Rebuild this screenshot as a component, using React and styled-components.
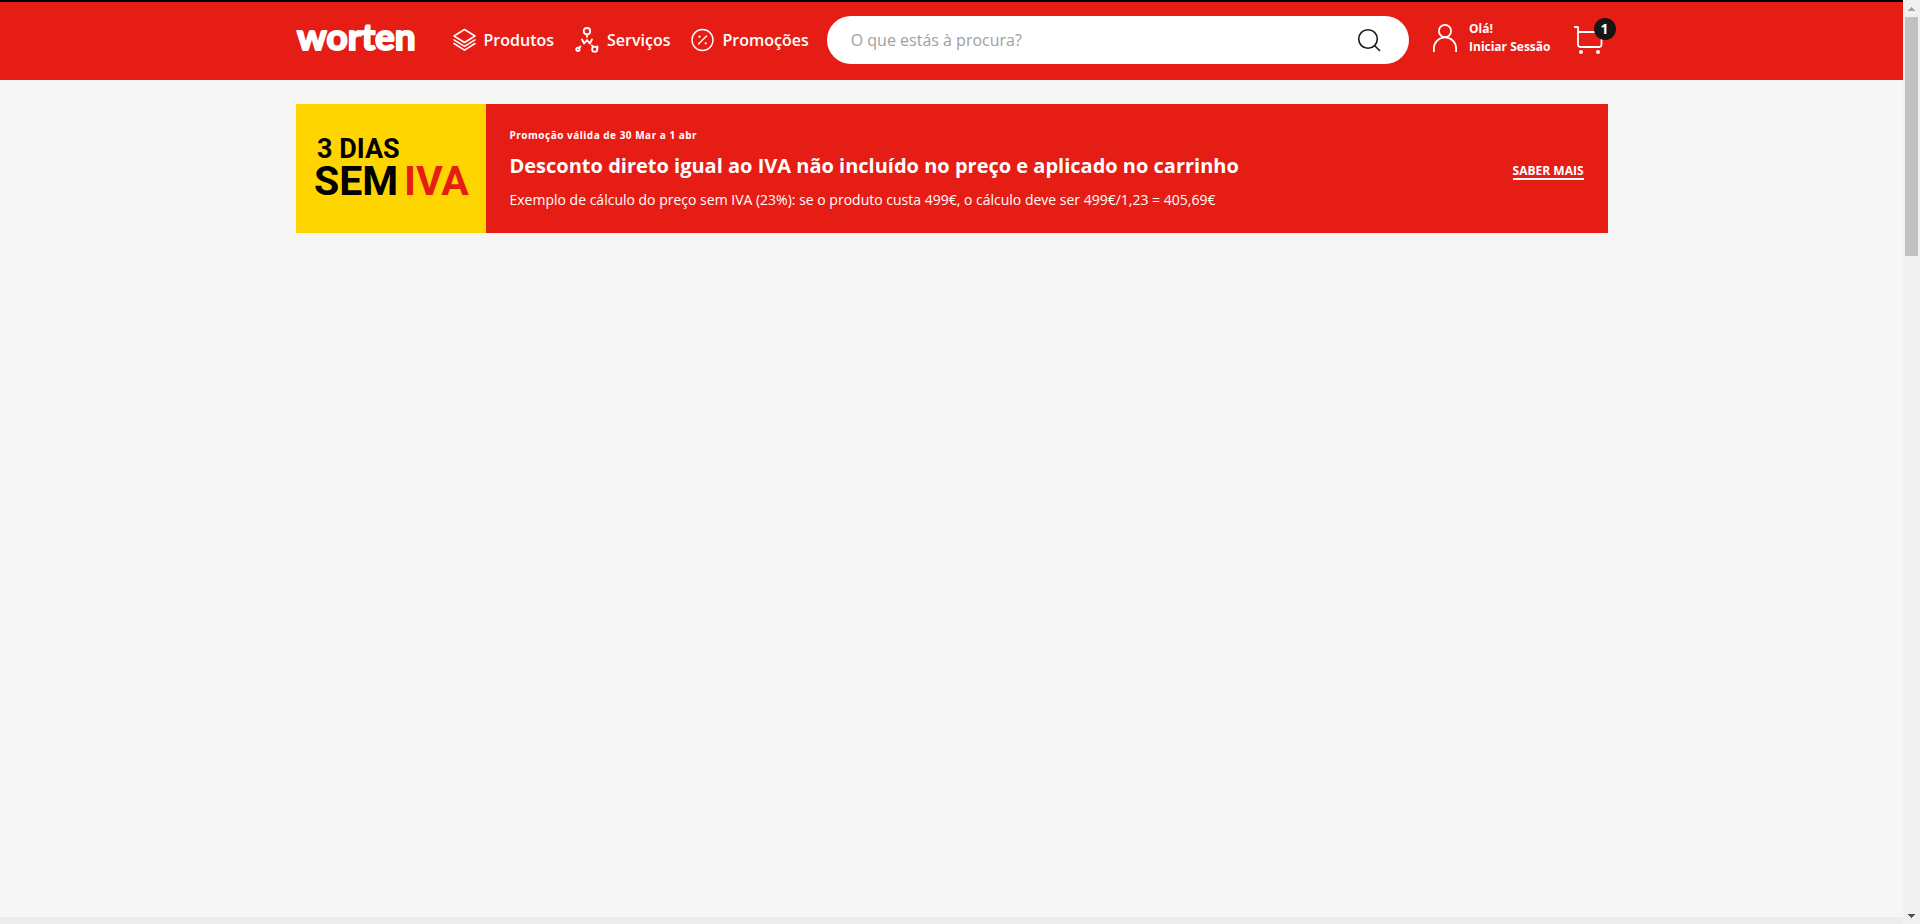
import React from "react";
import styled, { createGlobalStyle } from "styled-components";

const red = "#e61d15";

const GlobalStyle = createGlobalStyle`
  *, *::before, *::after { box-sizing: border-box; }
  body {
    margin: 0;
    background: #f6f6f6;
    color: #fff;
    font-family: "Open Sans", "Noto Sans", sans-serif;
    font-size: 16px;
  }
  a { color: inherit; text-decoration: none; }
  button { border: 0; padding: 0; background: none; color: inherit; font: inherit; cursor: pointer; }
  svg { display: block; flex: none; }
`;

const Screen = styled.div`
  display: grid;
  grid-template-columns: minmax(0, 1fr) 17px;
  min-height: 100vh;
`;

const Page = styled.div`
  display: flex;
  flex-direction: column;
`;

const Header = styled.header`
  background: ${red};
  border-top: 2px solid #000;
`;

const Container = styled.div`
  width: 100%;
  max-width: 1312px;
  margin: 0 auto;
`;

const HeaderRow = styled(Container)`
  display: flex;
  align-items: center;
  height: 78px;
  padding-bottom: 2px;
`;

const LogoLink = styled.a`
  margin-right: 37px;
`;

const Nav = styled.nav`
  display: flex;
  gap: 21px;
  margin-right: 18px;
`;

const NavLink = styled.a`
  display: flex;
  align-items: center;
  gap: 8px;
  font-weight: 600;
  line-height: 24px;
`;

const SearchForm = styled.form`
  display: flex;
  flex: 1;
  align-items: center;
  min-width: 0;
  height: 48px;
  padding: 0 28px 0 24px;
  border-radius: 24px;
  background: #fff;
  color: #1a1a1a;
`;

const SearchInput = styled.input`
  flex: 1;
  min-width: 0;
  padding: 0;
  border: 0;
  outline: 0;
  background: transparent;
  color: #1a1a1a;
  font: inherit;
  line-height: 24px;
  &::placeholder { color: #a0a0a0; opacity: 1; }
`;

const Account = styled.a`
  display: flex;
  align-items: center;
  gap: 11px;
  margin: 0 23px;
  padding-bottom: 4px;
  font-size: 12px;
  font-weight: 700;
  line-height: 18px;
`;

const AccountText = styled.span`
  display: flex;
  flex-direction: column;
`;

const CartButton = styled.button`
  position: relative;
  width: 34px;
`;

const Badge = styled.span`
  position: absolute;
  top: -8px;
  right: -8px;
  width: 22px;
  height: 22px;
  border-radius: 50%;
  background: #161616;
  font-size: 14px;
  font-weight: 700;
  line-height: 22px;
  text-align: center;
`;

const Main = styled.main`
  flex: 1;
  padding-top: 24px;
`;

const Banner = styled(Container)`
  display: flex;
  background: ${red};
`;

const BannerArt = styled.div`
  display: flex;
  flex: none;
  align-items: center;
  justify-content: center;
  width: 190px;
  background: #ffd500;
`;

const BannerBody = styled.div`
  flex: 1;
  padding: 23px 24px;
`;

const Validity = styled.p`
  margin: 0 0 9px;
  font-size: 10px;
  font-weight: 700;
  line-height: 16px;
  letter-spacing: 0.5px;
`;

const BannerTitle = styled.h1`
  margin: 0 0 10px;
  font-size: 20px;
  font-weight: 700;
  line-height: 28px;
`;

const Example = styled.p`
  margin: 0;
  font-size: 14px;
  line-height: 20px;
`;

const MoreLink = styled.a`
  align-self: center;
  margin: 6px 24px 0 0;
  border-bottom: 2px solid #fff;
  font-size: 12px;
  font-weight: 700;
  line-height: 14px;
`;

const NextSection = styled.div`
  height: 7px;
  background: #ececec;
`;

const ScrollTrack = styled.div`
  display: flex;
  flex-direction: column;
  align-items: center;
  background: #f0f0f0;
`;

const ScrollArrow = styled.span`
  display: flex;
  align-items: center;
  justify-content: center;
  height: 17px;
  color: ${(p) => (p.$active ? "#505050" : "#a3a3a3")};
`;

const ScrollThumb = styled.span`
  width: 13px;
  height: 239px;
  margin-bottom: auto;
  background: #c1c1c1;
`;

const Wordmark = () => (
  <svg width="120" height="28" viewBox="0 0 120 28" role="img" aria-label="worten" overflow="visible">
    <text x="1" y="24" fontFamily="Lato, sans-serif" fontWeight="700" fontSize="37" fill="#fff" stroke="#fff" strokeWidth="2" strokeLinejoin="round">
      worten
    </text>
  </svg>
);

const LayersIcon = () => (
  <svg width="23" height="24" viewBox="0 0 23 24" fill="none" stroke="currentColor" strokeWidth="1.5" strokeLinejoin="round" strokeLinecap="round">
    <path d="M11.500 1.500 22 8 11.500 14.500 1 8Z" />
    <path d="M1 11.800l10.500 6.600L22 11.800M1 15.500l10.500 6.700L22 15.500" />
  </svg>
);

const ServicesIcon = () => (
  <svg width="24" height="26" viewBox="0 0 24 26" fill="none" stroke="currentColor" strokeWidth="1.8" strokeLinejoin="round" strokeLinecap="round">
    <circle cx="12" cy="4.200" r="3.200" />
    <path d="M12 7.500v2.300M7 12.500l2.200 4L12 13l2.800 3.500L17 12.500M5.500 19.500 3.600 21M16.800 18.400l1.200 1.200" />
    <circle cx="2.900" cy="22.300" r="1.700" />
    <circle cx="19.700" cy="22.300" r="2.600" />
    <path d="M22.400 19.500v2" />
  </svg>
);

const PercentIcon = () => (
  <svg width="23" height="24" viewBox="0 0 23 24" fill="none" stroke="currentColor" strokeWidth="1.4" strokeLinecap="round">
    <circle cx="11.500" cy="12" r="10.500" />
    <path d="M15.500 8 7.500 16" />
    <circle cx="8.400" cy="8.700" r="1.100" fill="currentColor" stroke="none" />
    <circle cx="14.700" cy="15.300" r="1.100" fill="currentColor" stroke="none" />
  </svg>
);

const SearchIcon = () => (
  <svg width="24" height="24" viewBox="0 0 24 24" fill="none" stroke="currentColor" strokeWidth="1.600">
    <circle cx="11" cy="11" r="9.300" />
    <path d="m17.500 17.500 5.500 5.500" />
  </svg>
);

const UserIcon = () => (
  <svg width="26" height="28" viewBox="0 0 26 28" fill="none" stroke="currentColor" strokeWidth="1.800">
    <circle cx="13" cy="7" r="6.100" />
    <path d="M1.900 28v-3.500a11.100 11.100 0 0 1 22.200 0V28" />
  </svg>
);

const CartIcon = () => (
  <svg width="29" height="28" viewBox="0 0 29 28" fill="none" stroke="currentColor" strokeWidth="1.800" strokeLinejoin="round">
    <path d="M0 1h4v17.500a2.500 2.500 0 0 0 2.500 2.500H25a2.500 2.500 0 0 0 2.500-2.500V6H4" />
    <circle cx="7" cy="26" r="2" fill="currentColor" stroke="none" />
    <circle cx="24" cy="26" r="2" fill="currentColor" stroke="none" />
  </svg>
);

const CampaignArt = () => (
  <svg width="152" height="58" viewBox="0 0 152 58" role="img" aria-label="3 dias sem IVA" overflow="visible">
    <g fontFamily="Roboto, sans-serif" fontWeight="700">
      <text x="2" y="18" fontSize="27" fill="#000">3 DIAS</text>
      <text x="-1" y="55" fontSize="41" fill="#000">SEM</text>
      <text x="89" y="55" fontSize="41" fill={red}>IVA</text>
    </g>
  </svg>
);

const Triangle = ({ down }) => (
  <svg width="7" height="4" viewBox="0 0 7 4" fill="currentColor" shapeRendering="crispEdges">
    <path d={down ? "M0 0h7L4 4H3Z" : "M0 4h7L4 0H3Z"} />
  </svg>
);

const links = [
  { label: "Produtos", Icon: LayersIcon },
  { label: "Serviços", Icon: ServicesIcon },
  { label: "Promoções", Icon: PercentIcon },
];

export default function App() {
  return (
    <>
      <GlobalStyle />
      <Screen>
        <Page>
          <Header>
            <HeaderRow>
              <LogoLink href="#"><Wordmark /></LogoLink>
              <Nav>
                {links.map(({ label, Icon }) => (
                  <NavLink href="#" key={label}><Icon />{label}</NavLink>
                ))}
              </Nav>
              <SearchForm role="search">
                <SearchInput type="text" aria-label="Pesquisar" placeholder="O que estás à procura?" />
                <button type="submit" aria-label="Pesquisar"><SearchIcon /></button>
              </SearchForm>
              <Account href="#">
                <UserIcon />
                <AccountText><span>Olá!</span><span>Iniciar Sessão</span></AccountText>
              </Account>
              <CartButton type="button" aria-label="Carrinho">
                <CartIcon />
                <Badge>1</Badge>
              </CartButton>
            </HeaderRow>
          </Header>
          <Main>
            <Banner>
              <BannerArt><CampaignArt /></BannerArt>
              <BannerBody>
                <Validity>Promoção válida de 30 Mar a 1 abr</Validity>
                <BannerTitle>Desconto direto igual ao IVA não incluído no preço e aplicado no carrinho</BannerTitle>
                <Example>Exemplo de cálculo do preço sem IVA (23%): se o produto custa 499€, o cálculo deve ser 499€/1,23 = 405,69€</Example>
              </BannerBody>
              <MoreLink href="#">SABER MAIS</MoreLink>
            </Banner>
          </Main>
          <NextSection />
        </Page>
        <ScrollTrack aria-hidden="true">
          <ScrollArrow><Triangle /></ScrollArrow>
          <ScrollThumb />
          <ScrollArrow $active><Triangle down /></ScrollArrow>
        </ScrollTrack>
      </Screen>
    </>
  );
}
